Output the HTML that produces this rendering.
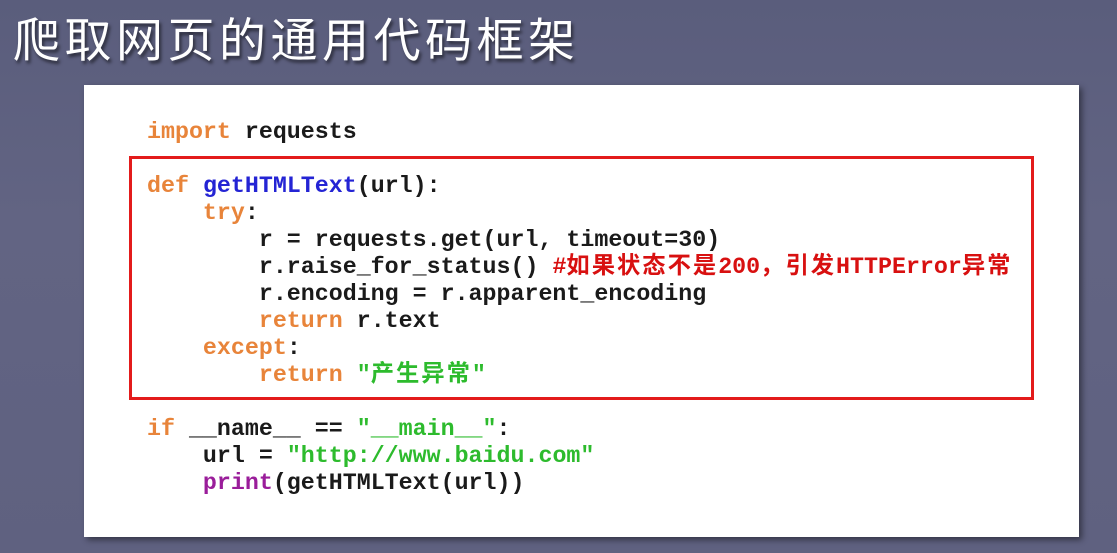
<!DOCTYPE html>
<html><head><meta charset="utf-8"><style>
html,body{margin:0;padding:0}
body{width:1117px;height:553px;overflow:hidden;position:relative;background:linear-gradient(180deg,#5a5d7c 0%,#626483 40%,#5f6180 100%);font-family:"Liberation Sans","Noto Sans CJK SC",sans-serif}
.title{position:absolute;left:13px;top:2px;font-size:47px;color:#fff;letter-spacing:4.5px;text-shadow:2px 3px 3px rgba(0,0,0,.55);white-space:nowrap;font-family:"Noto Sans CJK SC",sans-serif;font-weight:400}
.box{position:absolute;left:84px;top:85px;width:995px;height:452px;background:#fff;box-shadow:3px 3px 6px rgba(0,0,0,.45)}
.red{position:absolute;left:129px;top:156px;width:899px;height:238px;border:3px solid #e31b1b}
.l{position:absolute;left:147px;font-family:"Liberation Mono","Noto Sans CJK SC",monospace;font-size:23.3px;font-weight:bold;color:#1a1a1a;white-space:pre;line-height:27px;height:27px}
.k{color:#e8843a}.f{color:#2424d4}.s{color:#2dbb2d}.c{color:#d81010}.p{color:#9a1d9a}
.cj{letter-spacing:2px}
</style></head><body>
<div class="title">爬取网页的通用代码框架</div>
<div class="box"></div>
<div class="red"></div>
<div class="l" style="top:119px"><span class="k">import</span> requests</div>
<div class="l" style="top:173px"><span class="k">def</span> <span class="f">getHTMLText</span>(url):</div>
<div class="l" style="top:200px">    <span class="k">try</span>:</div>
<div class="l" style="top:227px">        r = requests.get(url, timeout=30)</div>
<div class="l" style="top:254px">        r.raise_for_status() <span class="c">#<span class="cj">如果状态不是</span>200<span class="cj">，引发</span>HTTPError<span class="cj">异常</span></span></div>
<div class="l" style="top:281px">        r.encoding = r.apparent_encoding</div>
<div class="l" style="top:308px">        <span class="k">return</span> r.text</div>
<div class="l" style="top:335px">    <span class="k">except</span>:</div>
<div class="l" style="top:362px">        <span class="k">return</span> <span class="s">"<span class="cj">产生异常</span>"</span></div>
<div class="l" style="top:416px"><span class="k">if</span> __name__ == <span class="s">"__main__"</span>:</div>
<div class="l" style="top:443px">    url = <span class="s">"http://www.baidu.com"</span></div>
<div class="l" style="top:470px">    <span class="p">print</span>(getHTMLText(url))</div>
</body></html>
